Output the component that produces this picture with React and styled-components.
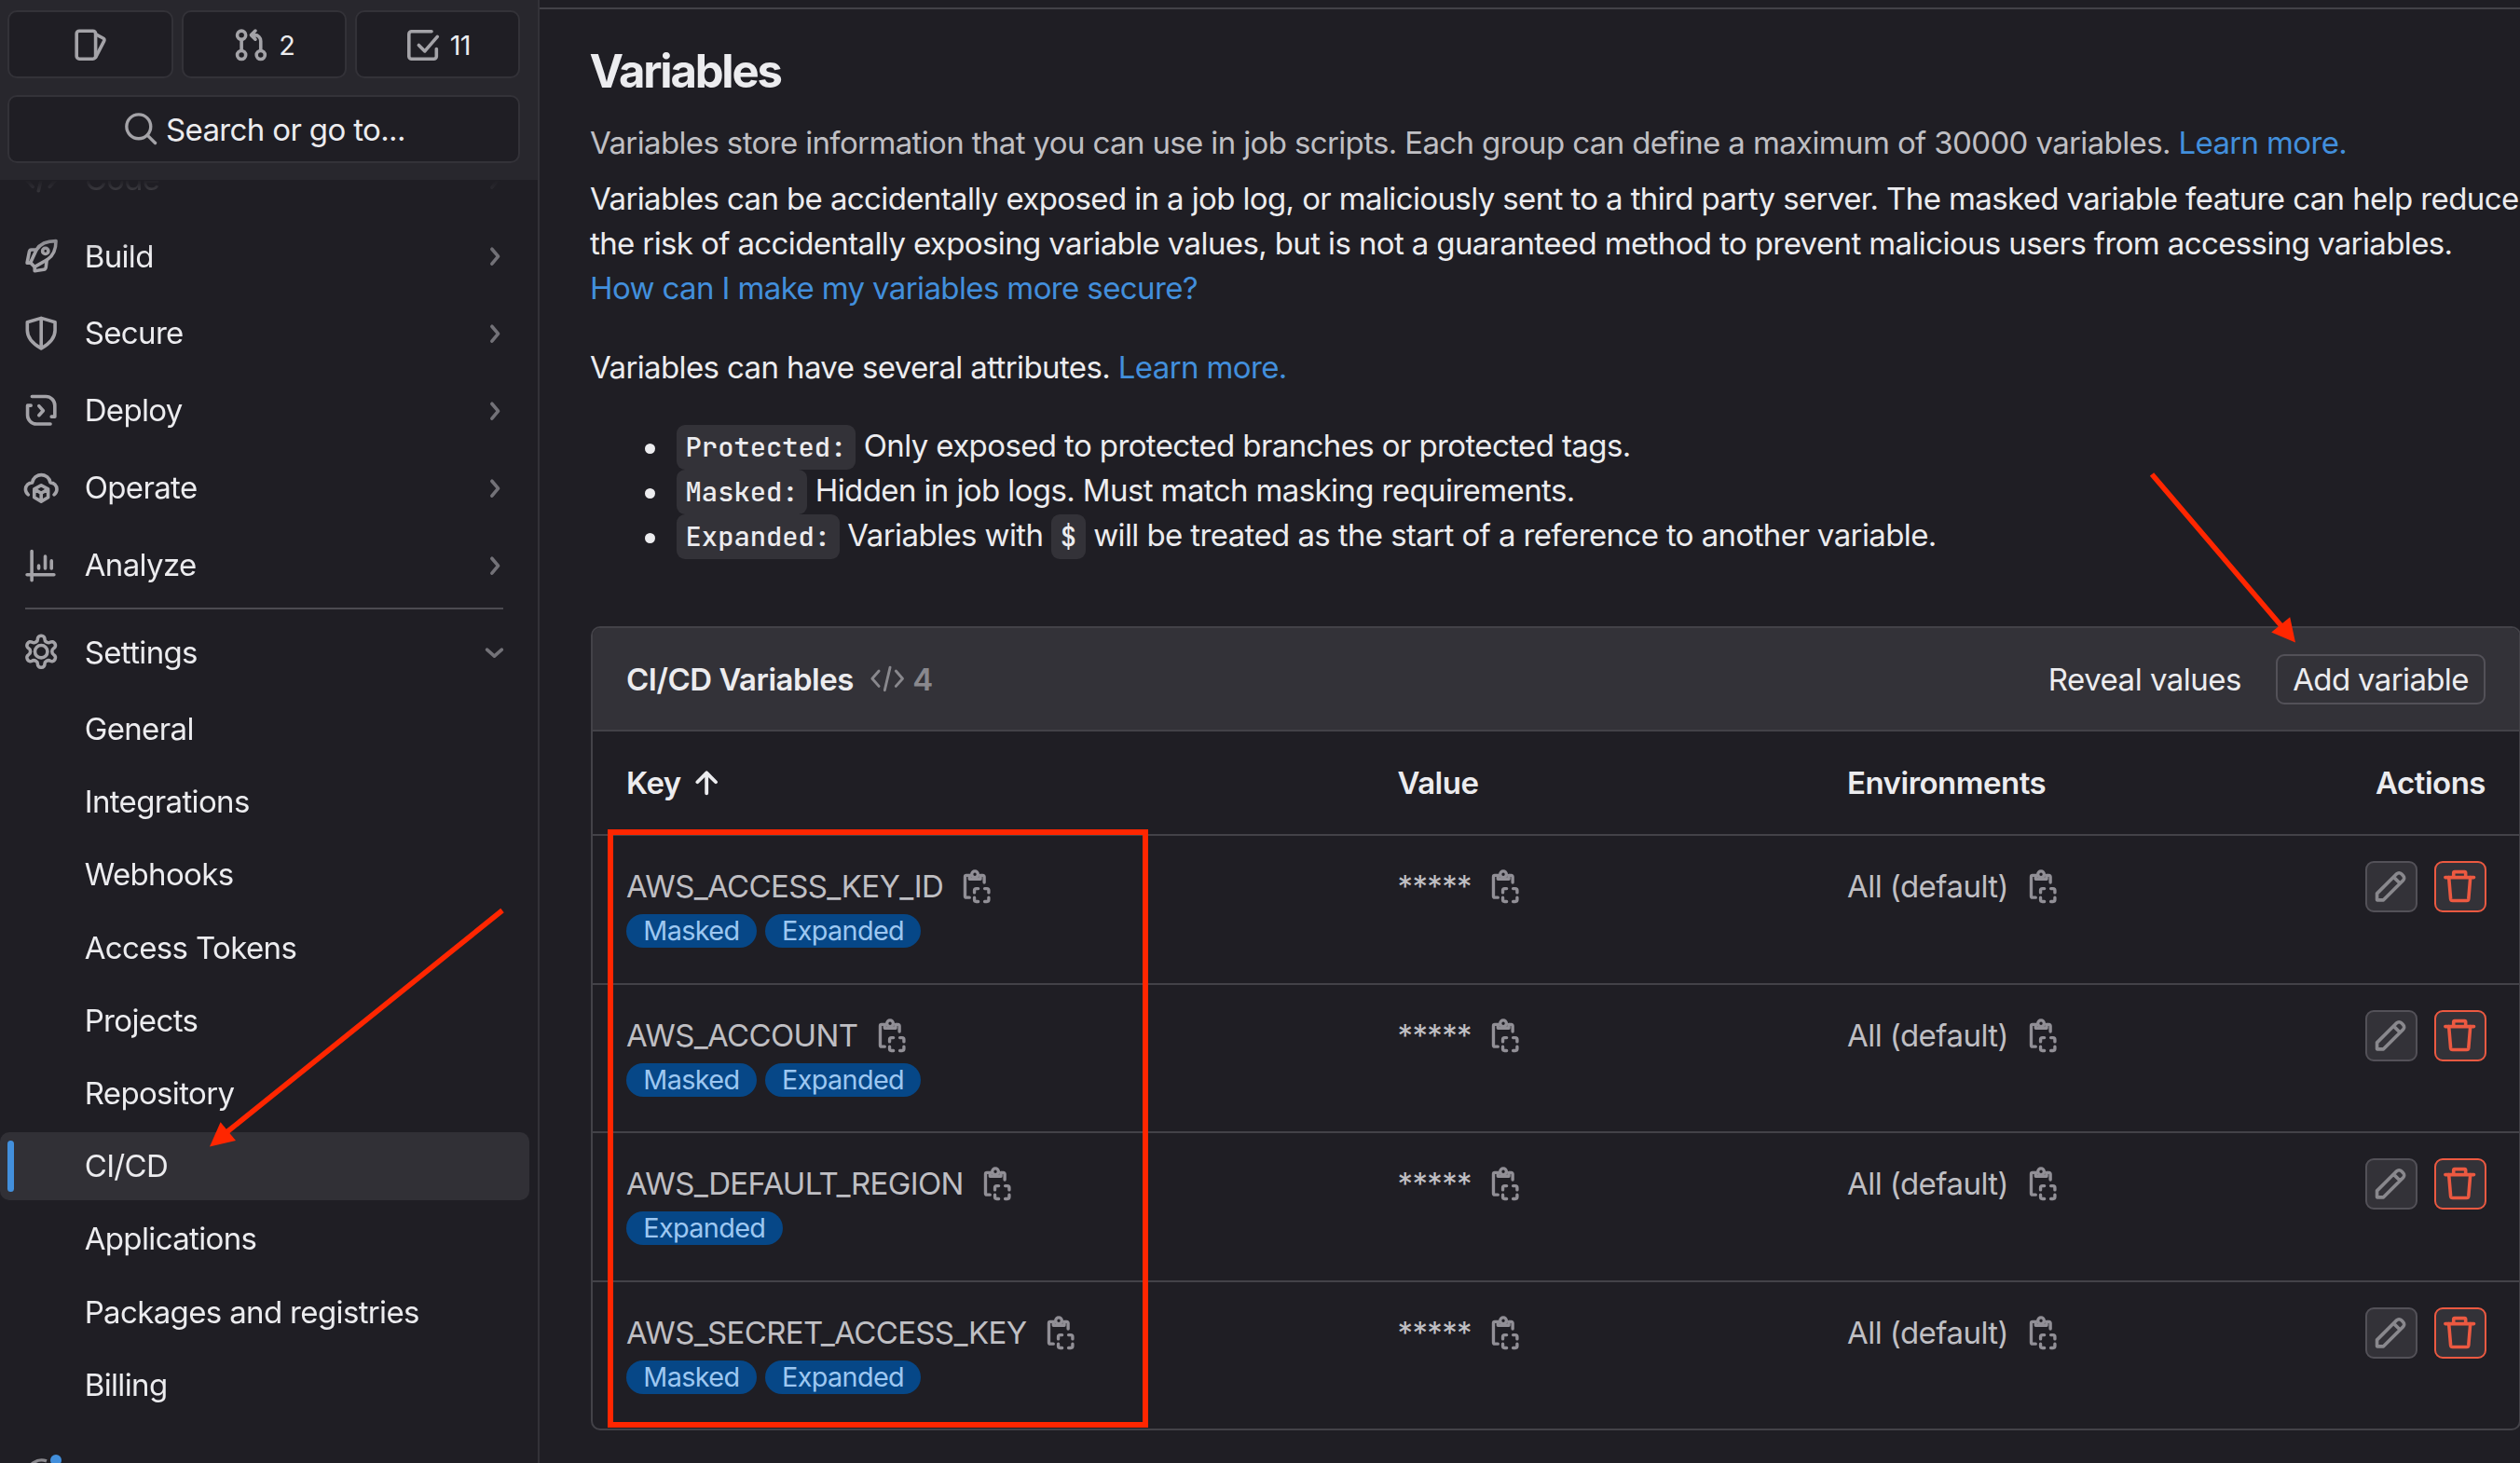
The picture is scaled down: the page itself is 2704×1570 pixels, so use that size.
import React from 'react'
import styled, { createGlobalStyle } from 'styled-components'

const GlobalStyle = createGlobalStyle`
    *{
        box-sizing: border-box;
    }
    body{
        margin: 0;
        background-color: #1f1e24;
        overflow: hidden;
    }
`

// icons, all drawn on a 16px grid
const icons = {
    issues: <>
        <rect x="1.75" y="1.75" width="8.5" height="12.5" rx="1.2" />
        <path d="M10.4 3.3l3.2 1.7a1 1 0 0 1 .4 1.3l-3.7 7.2" />
    </>,
    merge: <>
        <circle cx="3.8" cy="3.6" r="1.9" />
        <circle cx="3.8" cy="12.5" r="1.9" />
        <circle cx="12.4" cy="12.5" r="1.9" />
        <path d="M3.8 5.6v4.9M12.4 10.5V6.2a2.6 2.6 0 0 0-2.6-2.6H8.6M10 1.7L8.1 3.6l1.9 1.9" />
    </>,
    todo: <>
        <path d="M12.1 2H3.2A1.2 1.2 0 0 0 2 3.2v9.9a1.2 1.2 0 0 0 1.2 1.2h9.9a1.2 1.2 0 0 0 1.2-1.2V9.8" />
        <path d="M6.4 8.1l2.7 2.7 5.6-6.5" />
    </>,
    search: <>
        <circle cx="7" cy="7" r="5.4" />
        <path d="M11 11l3.4 3.4" />
    </>,
    code: <path d="M4.2 4.6L1.2 8l3 3.4M11.8 4.6l3 3.4-3 3.4M9.2 3L6.8 13.2" />,
    build: <>
        <path d="M14.6 1.5C10 1.5 7.3 3.1 5.9 5.4L3.2 11.2l1.9 1.9 5.7-3.3c2.5-1.6 3.8-4.3 3.8-8.3z" />
        <path d="M5.9 5.4H3.7a1 1 0 0 0-1 .8l-1 5.1h1.5M5.1 13v1.9l4-.6a1.2 1.2 0 0 0 1-.9l.4-3.4" />
        <circle cx="9.9" cy="6" r="1.3" />
    </>,
    secure: <path d="M8 1.4l6.2 1.8v3.7c0 3.2-2.3 5.9-6.2 8.1-3.9-2.2-6.2-4.9-6.2-8.1V3.2L8 1.4zM8 1.4v13.4" />,
    deploy: <>
        <path d="M3.9 1.9h6.2a4 4 0 0 1 4 4v5h-1.5M3.4 5.9H1.9v4.3a4 4 0 0 0 4 4h6.2" />
        <path d="M7 6.1L8.9 8.2 7 10.3" />
    </>,
    operate: <>
        <path d="M2.2 11.2a3 3 0 0 1-1.2-2.4 3 3 0 0 1 3-3 4.1 4.1 0 0 1 8.1 0A3 3 0 0 1 15 8.8a3 3 0 0 1-1.2 2.4" />
        <path d="M8 7l3.1 1.7v3.7L8 14.2l-3.1-1.8V8.7L8 7zM4.9 8.7L8 10.5l3.1-1.8M8 10.5v3.7" />
    </>,
    analyze: <path d="M3.8 1.9v13M1.7 12.4h12M6.9 8.4v1.2M9.8 4.2v5.4M12.6 6.2v3.4" />,
    settings: <>
        <path
            transform="translate(-.5 -.5) scale(.708)"
            strokeWidth="2.1"
            d="M12.22 2h-.44a2 2 0 0 0-2 2v.18a2 2 0 0 1-1 1.73l-.43.25a2 2 0 0 1-2 0l-.15-.08a2 2 0 0 0-2.73.73l-.22.38a2 2 0 0 0 .73 2.73l.15.1a2 2 0 0 1 1 1.72v.51a2 2 0 0 1-1 1.74l-.15.09a2 2 0 0 0-.73 2.73l.22.38a2 2 0 0 0 2.73.73l.15-.08a2 2 0 0 1 2 0l.43.25a2 2 0 0 1 1 1.73V20a2 2 0 0 0 2 2h.44a2 2 0 0 0 2-2v-.18a2 2 0 0 1 1-1.73l.43-.25a2 2 0 0 1 2 0l.15.08a2 2 0 0 0 2.73-.73l.22-.39a2 2 0 0 0-.73-2.73l-.15-.08a2 2 0 0 1-1-1.74v-.5a2 2 0 0 1 1-1.74l.15-.09a2 2 0 0 0 .73-2.73l-.22-.38a2 2 0 0 0-2.73-.73l-.15.08a2 2 0 0 1-2 0l-.43-.25a2 2 0 0 1-1-1.73V4a2 2 0 0 0-2-2z"
        />
        <circle cx="8" cy="8" r="2.8" />
    </>,
    right: <path d="M6.6 4.7L9.4 8l-2.8 3.3" />,
    down: <path d="M4.4 6.7L7.7 9.6 11 6.7" />,
    up: <path d="M8 12.6V3.6M3.9 7.6L8 3.5l4.1 4.1" />,
    copy: <>
        <path d="M4.7 13H3.3a.6.6 0 0 1-.6-.6V3.7a.6.6 0 0 1 .6-.6h1.4M9.6 3.1h1.1a.6.6 0 0 1 .6.6v2.6" />
        <path d="M4.7 3.1v1.6h4.9V3.1" />
        <circle cx="7.1" cy="2.6" r="1.4" />
        <path d="M6.9 10.8v-1a.8.8 0 0 1 .8-.8h.9M11.5 9h1a.8.8 0 0 1 .8.8v1M13.3 13v1a.8.8 0 0 1-.8.8h-1M8.6 14.8h-.9a.8.8 0 0 1-.8-.8v-1" />
    </>,
    pencil: <path d="M1.9 14.1v-2.9l8.8-8.8a1.5 1.5 0 0 1 2.1 0l.8.8a1.5 1.5 0 0 1 0 2.1l-8.8 8.8H1.9zM9.4 3.9l2.7 2.7" />,
    remove: <>
        <path d="M1.6 4h12.8M5.3 4V1.9a.4.4 0 0 1 .4-.4h4.6a.4.4 0 0 1 .4.4V4" />
        <path d="M3.2 4l.8 9.6a.9.9 0 0 0 .9.8h6.2a.9.9 0 0 0 .9-.8l.8-9.6" />
    </>,
}

const Svg = styled.svg`
    display: block;
    flex: none;
    width: 38.4px;
    height: 38.4px;
    fill: none;
    stroke: ${p => p.$color || '#a4a3a8'};
    stroke-width: ${p => p.$stroke || 1.5};
    stroke-linecap: round;
    stroke-linejoin: round;
`

const Icon = ({ name, color, stroke, className }) => (
    <Svg viewBox="0 0 16 16" $color={color} $stroke={stroke} className={className}>{icons[name]}</Svg>
)

const menu = [
    ['Code', 'code'],
    ['Build', 'build'],
    ['Secure', 'secure'],
    ['Deploy', 'deploy'],
    ['Operate', 'operate'],
    ['Analyze', 'analyze'],
]

const settings = [
    'General',
    'Integrations',
    'Webhooks',
    'Access Tokens',
    'Projects',
    'Repository',
    'CI/CD',
    'Applications',
    'Packages and registries',
    'Billing',
]

const variables = [
    { key: 'AWS_ACCESS_KEY_ID', tags: ['Masked', 'Expanded'] },
    { key: 'AWS_ACCOUNT', tags: ['Masked', 'Expanded'] },
    { key: 'AWS_DEFAULT_REGION', tags: ['Expanded'] },
    { key: 'AWS_SECRET_ACCESS_KEY', tags: ['Masked', 'Expanded'] },
]

function Sidebar() {
    return (
        <Side>
            <SideTop>
                <Counters>
                    <SideButton><Icon name="issues" /></SideButton>
                    <SideButton><Icon name="merge" />2</SideButton>
                    <SideButton><Icon name="todo" />11</SideButton>
                </Counters>
                <Search><Icon name="search" stroke={1.4} />Search or go to...</Search>
            </SideTop>
            <Nav>
                {menu.map(([label, icon]) => (
                    <NavItem key={label}>
                        <Icon name={icon} />
                        <span>{label}</span>
                        <Icon name="right" color="#737278" className="chevron" />
                    </NavItem>
                ))}
                <Divider />
                <NavItem>
                    <Icon name="settings" />
                    <span>Settings</span>
                    <Icon name="down" color="#737278" className="chevron" />
                </NavItem>
                <SubList>
                    {settings.map(label => (
                        <SubItem key={label} $active={label === 'CI/CD'}>{label}</SubItem>
                    ))}
                </SubList>
                <Help viewBox="0 0 48 24">
                    <path d="M4.6 23a15.1 15.1 0 0 1 20.4 -14.1" />
                    <circle cx="35" cy="8" r="6" />
                </Help>
            </Nav>
        </Side>
    )
}

function VariablesTable() {
    return (
        <Card>
            <CardHeader>
                <CardTitle>CI/CD Variables</CardTitle>
                <Count><Icon name="code" color="#89888d" stroke={1.2} />4</Count>
                <Reveal>Reveal values</Reveal>
                <AddButton>Add variable</AddButton>
            </CardHeader>
            <HeadRow>
                <HeadCell>Key<Icon name="up" color="#ececef" stroke={1.6} /></HeadCell>
                <HeadCell>Value</HeadCell>
                <HeadCell>Environments</HeadCell>
                <HeadCell>Actions</HeadCell>
            </HeadRow>
            {variables.map(v => (
                <Row key={v.key}>
                    <div>
                        <Cell>{v.key}<Icon name="copy" color="#918f96" stroke={1.4} /></Cell>
                        <Tags>
                            {v.tags.map(t => <Badge key={t}>{t}</Badge>)}
                        </Tags>
                    </div>
                    <Cell>*****<Icon name="copy" color="#918f96" stroke={1.4} /></Cell>
                    <Cell $loose>All (default)<Icon name="copy" color="#918f96" stroke={1.4} /></Cell>
                    <Actions>
                        <ActionButton><Icon name="pencil" color="#89888d" /></ActionButton>
                        <ActionButton $danger><Icon name="remove" color="#ec5941" /></ActionButton>
                    </Actions>
                </Row>
            ))}
        </Card>
    )
}

export default function App() {
    return (
        <Page>
            <GlobalStyle />
            <Sidebar />
            <Main>
                <Title>Variables</Title>
                <Text $muted>
                    Variables store information that you can use in job scripts. Each group can define a maximum of 30000 variables. <Link>Learn more.</Link>
                </Text>
                <Text $top={12}>
                    Variables can be accidentally exposed in a job log, or maliciously sent to a third party server. The masked variable feature can help reduce<br />
                    the risk of accidentally exposing variable values, but is not a guaranteed method to prevent malicious users from accessing variables.<br />
                    <Link>How can I make my variables more secure?</Link>
                </Text>
                <Text $top={37}>Variables can have several attributes. <Link>Learn more.</Link></Text>
                <List>
                    <li><Code>Protected:</Code> Only exposed to protected branches or protected tags.</li>
                    <li><Code>Masked:</Code> Hidden in job logs. Must match masking requirements.</li>
                    <li><Code>Expanded:</Code> Variables with <Code>$</Code> will be treated as the start of a reference to another variable.</li>
                </List>
                <VariablesTable />
            </Main>
            <Highlight />
            <Arrows viewBox="0 0 2704 1570">
                <path d="M2309 509L2449 673M539 977L242 1216" />
                <polygon points="2463,689.5 2437.2,678.4 2457.2,662.2" />
                <polygon points="225,1230.5 236.6,1204.3 253,1224" />
            </Arrows>
        </Page>
    )
}

const Page = styled.div`
    position: relative;
    display: flex;
    width: 2704px;
    height: 1570px;
    overflow: hidden;
    background-color: #1f1e24;
    color: #ececef;
    font-family: Inter, 'Liberation Sans', sans-serif;
    font-size: 33px;
    line-height: 48px;
    letter-spacing: -0.0195em;
    white-space: nowrap;
`
const Side = styled.aside`
    display: flex;
    flex-direction: column;
    flex: none;
    width: 579px;
    height: 100%;
    border-right: 2px solid #333238;
`
const SideTop = styled.div`
    display: flex;
    flex-direction: column;
    flex: none;
    gap: 18px;
    height: 193px;
    padding: 11px 19px 0 8.4px;
    background-color: #28272d;
`
const Counters = styled.div`
    display: grid;
    grid-template-columns: repeat(3, 1fr);
    gap: 9px;
`
const SideButton = styled.div`
    display: flex;
    align-items: center;
    justify-content: center;
    gap: 10.5px;
    height: 73px;
    padding-top: 2px;
    border: 2px solid #333238;
    border-radius: 10px;
    background-color: #1f1e24;
    font-size: 28.8px;
`
const Search = styled(SideButton)`
    gap: 8px;
    padding-top: 0;
    font-size: 33px;
`
const Nav = styled.nav`
    flex: 1;
    min-height: 0;
    overflow: hidden;
    mask-image: linear-gradient(to bottom, transparent, #000 80px);
`
const NavItem = styled.div`
    display: flex;
    align-items: center;
    gap: 27.5px;
    height: 82.8px;
    padding: 0 27px 0 24.8px;
    &:first-child{
        margin-top: -42.6px;
    }
    .chevron{
        margin: 2px 0 0 auto;
    }
`
const Divider = styled.hr`
    height: 2px;
    margin: 4.8px 37px 4.2px 27px;
    border: 0;
    background-color: #4c4b51;
`
const SubList = styled.div`
    display: flex;
    flex-direction: column;
    gap: 5.2px;
    padding-top: 4.6px;
`
const SubItem = styled.div`
    display: flex;
    align-items: center;
    height: 73px;
    margin-right: 9px;
    border-radius: 10px;
    background-color: ${p => p.$active ? '#313036' : 'transparent'};
    &::before{
        content: '';
        width: 7px;
        height: 55px;
        margin: 0 75.7px 0 8px;
        border-radius: 4px;
        background-color: ${p => p.$active ? '#428fdc' : 'transparent'};
    }
`
const Help = styled.svg`
    display: block;
    width: 48px;
    height: 24px;
    margin: 37px 0 0 25px;
    path{
        fill: none;
        stroke: #89888d;
        stroke-width: 3.4;
    }
    circle{
        fill: #428fdc;
    }
`
const Main = styled.main`
    flex: none;
    width: 2125px;
    margin-top: 8px;
    padding: 37px 0 0 55px;
    border-top: 2px solid #434248;
`
const Title = styled.h1`
    margin: 0 0 22px -1.5px;
    font-size: 49px;
    font-weight: 650;
    line-height: 60px;
    letter-spacing: -2.2px;
`
const Text = styled.p`
    margin: ${p => p.$top || 0}px 0 0 -1px;
    color: ${p => p.$muted ? '#bfbfc3' : '#ececef'};
    letter-spacing: ${p => p.$muted ? '-0.635px' : '-0.62px'};
`
const Link = styled.a`
    color: #428fdc;
`
const List = styled.ul`
    margin: 36px 0 74px;
    padding-left: 92px;
    list-style: none;
    letter-spacing: -0.61px;
    li::before{
        content: '';
        display: inline-block;
        width: 11px;
        height: 11px;
        margin: 0 23.5px 0 -34.5px;
        border-radius: 50%;
        background-color: #ececef;
        vertical-align: 3px;
    }
`
const Code = styled.code`
    padding: 4.8px 9.6px;
    border-radius: 9px;
    background-color: #333238;
    font-family: 'JetBrains Mono', 'DejaVu Sans Mono', monospace;
    font-size: 28.8px;
    font-weight: 500;
    line-height: 1;
    letter-spacing: 0;
`
const Card = styled.section`
    width: 2071px;
    border: 2px solid #434248;
    border-radius: 10px;
    overflow: hidden;
`
const CardHeader = styled.header`
    display: flex;
    align-items: center;
    height: 111px;
    padding: 0 36px;
    border-bottom: 2px solid #434248;
    background-color: #333238;
`
const CardTitle = styled.h2`
    margin: 0;
    font-size: inherit;
    font-weight: 600;
    letter-spacing: -0.5px;
`
const Count = styled.span`
    display: flex;
    align-items: center;
    gap: 8px;
    margin: 0 auto 0 17px;
    color: #89888d;
    font-weight: 600;
`
const Reveal = styled.span`
    margin-right: 37px;
    letter-spacing: -0.5px;
`
const AddButton = styled.span`
    display: flex;
    align-items: center;
    justify-content: center;
    width: 225px;
    height: 54px;
    border: 2px solid #535158;
    border-radius: 9px;
`
const HeadRow = styled.div`
    display: grid;
    grid-template-columns: 827.5px 482.5px 1fr auto;
    align-items: center;
    height: 110px;
    padding: 0 36px;
    font-weight: 600;
    letter-spacing: -0.5px;
`
const HeadCell = styled.div`
    display: flex;
    align-items: center;
    gap: 8px;
`
const Row = styled.div`
    display: grid;
    grid-template-columns: 827.5px 482.5px 1fr auto;
    align-items: start;
    height: 159.5px;
    padding: 30px 36px 0;
    border-top: 2px solid #434248;
    color: #bfbfc3;
    &:last-child{
        height: 159px;
    }
`
const Cell = styled.div`
    display: flex;
    align-items: center;
    gap: ${p => p.$loose ? 18 : 17.2}px;
    letter-spacing: ${p => p.$loose ? '-0.55px' : 'inherit'};
    svg{
        margin-top: 1px;
    }
`
const Tags = styled.div`
    display: flex;
    gap: 9px;
    margin-top: 6px;
`
const Badge = styled.span`
    height: 36px;
    padding: 0 18.3px;
    border-radius: 18px;
    background-color: #064787;
    color: #9dc7f1;
    font-size: 28.8px;
    line-height: 35px;
`
const Actions = styled.div`
    display: flex;
    gap: 18px;
    margin: -3px -0.5px 0 0;
`
const ActionButton = styled.span`
    display: flex;
    align-items: center;
    justify-content: center;
    width: 56px;
    height: 55px;
    border: 2px solid ${p => p.$danger ? '#ec5941' : '#535158'};
    border-radius: 9px;
    background-color: #333238;
`
const Highlight = styled.div`
    position: absolute;
    left: 652px;
    top: 890px;
    width: 580px;
    height: 642px;
    border: 6px solid #ff2600;
`
const Arrows = styled.svg`
    position: absolute;
    inset: 0;
    width: 2704px;
    height: 1570px;
    pointer-events: none;
    path{
        stroke: #ff2600;
        stroke-width: 5.6;
    }
    polygon{
        fill: #ff2600;
    }
`
